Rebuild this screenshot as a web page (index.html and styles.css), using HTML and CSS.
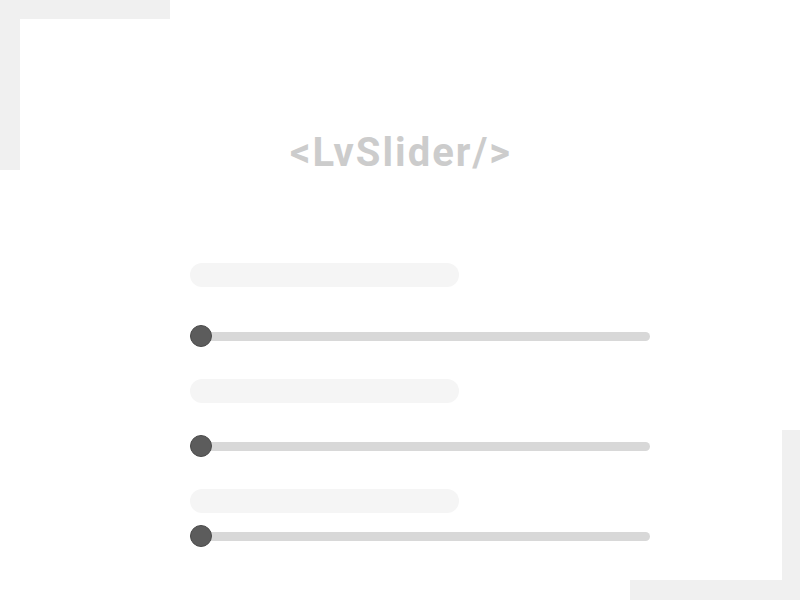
FILE: index.html
```html
<!DOCTYPE html>
<html>
<head>
<meta charset="utf-8">
<link rel="stylesheet" href="styles.css">
</head>
<body>
<div class="page">
  <div class="corner corner-tl"></div>
  <div class="corner corner-br"></div>
  <main class="content">
    <h1 class="title">&lt;LvSlider/&gt;</h1>
    <div class="groups">
      <section class="group group-1">
        <div class="skeleton"></div>
        <div class="slider slider-spaced"><div class="track"></div><div class="thumb"></div></div>
      </section>
      <section class="group group-2">
        <div class="skeleton"></div>
        <div class="slider slider-spaced-sm"><div class="track"></div><div class="thumb"></div></div>
      </section>
      <section class="group group-3">
        <div class="skeleton"></div>
        <div class="slider slider-tight"><div class="track"></div><div class="thumb"></div></div>
      </section>
    </div>
  </main>
</div>
</body>
</html>
```
FILE: styles.css
```css
html, body {
  margin: 0;
  padding: 0;
  background: #ffffff;
}
.page {
  position: relative;
  width: 800px;
  height: 600px;
  overflow: hidden;
  font-family: Roboto, "Liberation Sans", sans-serif;
}
.corner {
  position: absolute;
  width: 170px;
  height: 170px;
  box-sizing: border-box;
  border-color: #f0f0f0;
  border-style: solid;
}
.corner-tl {
  left: 0;
  top: 0;
  border-width: 19px 0 0 20px;
}
.corner-br {
  left: 630px;
  top: 430px;
  border-width: 0 18px 20px 0;
}
.content {
  display: flex;
  flex-direction: column;
  padding-top: 129px;
}
.title {
  margin: 0;
  font-size: 40px;
  line-height: 48px;
  font-weight: 700;
  color: #cccccc;
  text-align: center;
  letter-spacing: 2px;
  padding-left: 2px;
}
.groups {
  display: flex;
  flex-direction: column;
  width: 460px;
  margin-left: 190px;
}
.group {
  display: flex;
  flex-direction: column;
}
.group-1 { margin-top: 86px; }
.group-2 { margin-top: 32px; }
.group-3 { margin-top: 32px; }
.skeleton {
  width: 269px;
  height: 24px;
  border-radius: 12px;
  background: #f5f5f5;
}
.slider {
  position: relative;
  height: 22px;
  display: flex;
  align-items: center;
}
.slider-spaced { margin-top: 38px; }
.slider-spaced-sm { margin-top: 32px; }
.slider-tight { margin-top: 12px; }
.track {
  flex: 1;
  height: 9px;
  border-radius: 5px;
  background: #d8d8d8;
}
.thumb {
  position: absolute;
  left: 0;
  top: 0;
  width: 22px;
  height: 22px;
  box-sizing: border-box;
  border-radius: 50%;
  background: #5c5c5c;
  border: 1px solid #4a4a4a;
}
```
